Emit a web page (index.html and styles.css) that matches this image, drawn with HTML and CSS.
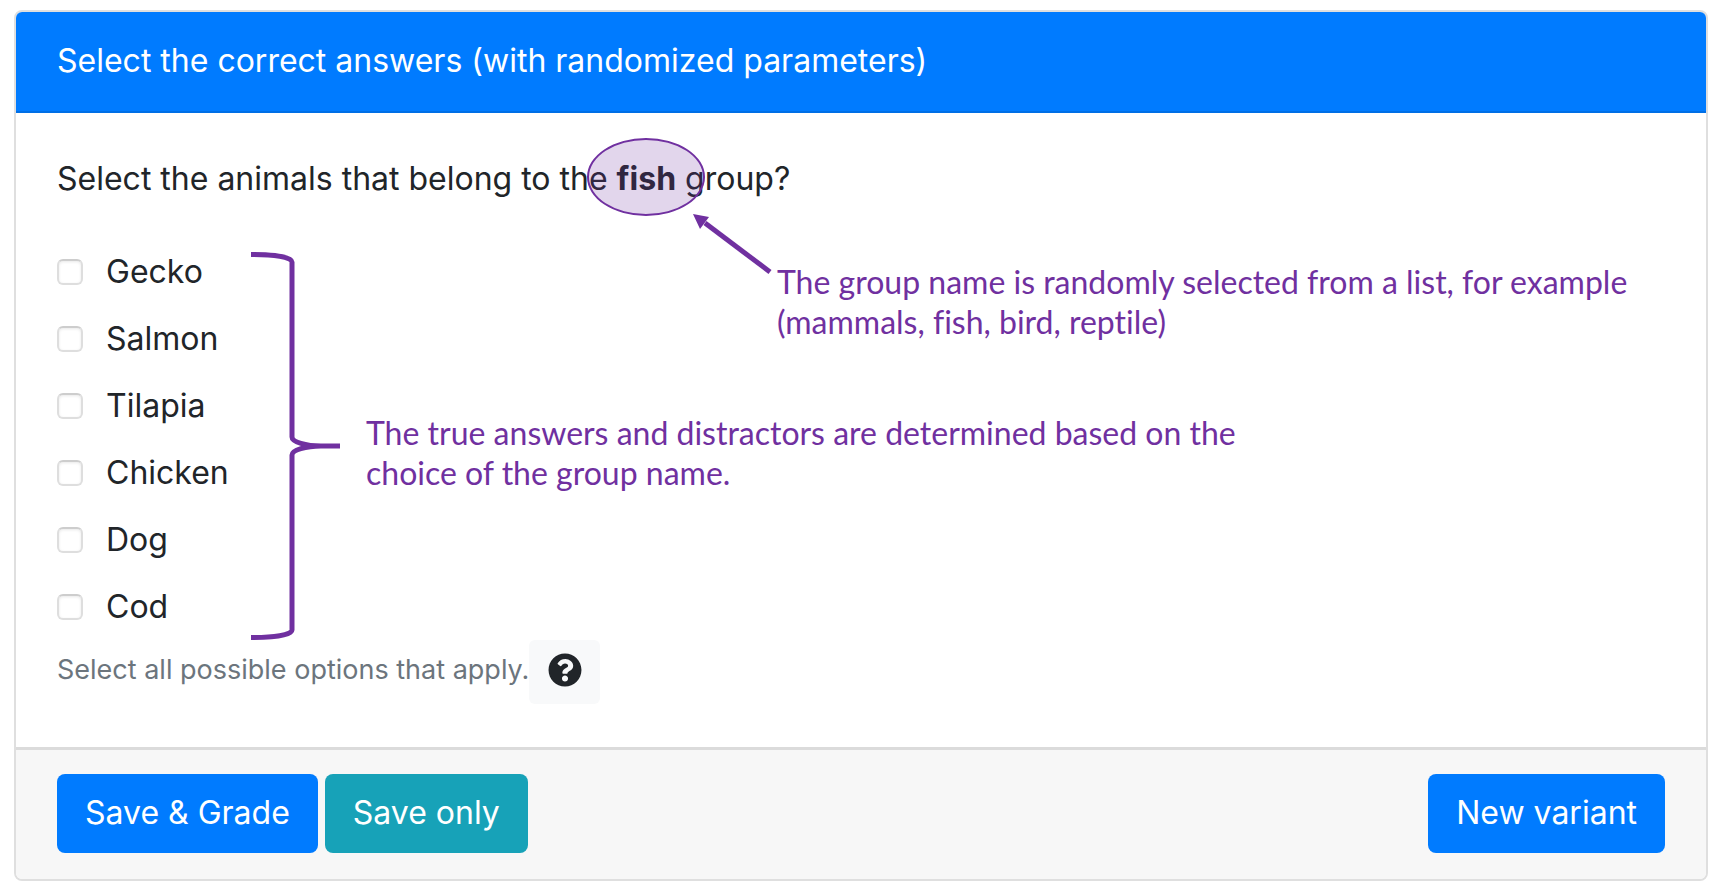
FILE: index.html
```html
<!DOCTYPE html>
<html lang="en">
<head>
<meta charset="utf-8">
<title>Select the correct answers</title>
<link rel="stylesheet" href="styles.css">
</head>
<body>
<form class="card">
  <header class="card-header">
    <h1 class="title">Select the correct answers (with randomized parameters)</h1>
  </header>
  <main class="card-body">
    <div class="question">
      <p class="prompt">Select the animals that belong to the <strong class="group">fish<span class="ellipse"></span></strong> group?</p>
      <div class="callout">
        <svg class="arrow" viewBox="0 0 80 62" aria-hidden="true">
          <path d="M12 9 77 58" stroke="#7030a0" stroke-width="5" fill="none"/>
          <path d="M0 0 16 3 7 15Z" fill="#7030a0"/>
        </svg>
        <p class="note">The group name is randomly selected from a list, for example<br>(mammals, fish, bird, reptile)</p>
      </div>
    </div>
    <div class="answers">
      <div class="options">
        <label class="option"><input class="check" type="checkbox">Gecko</label>
        <label class="option"><input class="check" type="checkbox">Salmon</label>
        <label class="option"><input class="check" type="checkbox">Tilapia</label>
        <label class="option"><input class="check" type="checkbox">Chicken</label>
        <label class="option"><input class="check" type="checkbox">Dog</label>
        <label class="option"><input class="check" type="checkbox">Cod</label>
      </div>
      <svg class="bracket" viewBox="0 0 90 388" aria-hidden="true">
        <path d="M0 2.500C22 2.500 41 5 41 10V185C41 190 55 194 70 194H89M0 385.500C22 385.500 41 383 41 378V203C41 198 55 194 70 194" fill="none" stroke="#7030a0" stroke-width="5"/>
      </svg>
      <p class="note">The true answers and distractors are determined based on the<br>choice of the group name.</p>
    </div>
    <div class="help">
      <span class="help-text">Select all possible options that apply.</span>
      <button class="help-button" type="button" aria-label="Help">
        <svg class="help-icon" viewBox="0 0 512 512" aria-hidden="true"><path fill="currentColor" d="M504 256c0 136.997-111.043 248-248 248S8 392.997 8 256C8 119.083 119.043 8 256 8s248 111.083 248 248zM262.655 90c-54.497 0-89.255 22.957-116.549 63.758-3.536 5.286-2.353 12.415 2.715 16.258l34.699 26.310c5.205 3.947 12.621 3.008 16.665-2.122 17.864-22.658 30.113-35.797 57.303-35.797 20.429 0 45.698 13.148 45.698 32.958 0 14.976-12.363 22.667-32.534 33.976C247.128 238.528 216 254.941 216 296v4c0 6.627 5.373 12 12 12h56c6.627 0 12-5.373 12-12v-1.333c0-28.462 83.186-29.647 83.186-106.667 0-58.002-60.165-102-116.531-102zM256 338c-25.365 0-46 20.635-46 46 0 25.364 20.635 46 46 46s46-20.636 46-46c0-25.365-20.635-46-46-46z"/></svg>
      </button>
    </div>
  </main>
  <footer class="card-footer">
    <button class="button primary" type="submit">Save &amp; Grade</button>
    <button class="button info" type="button">Save only</button>
    <button class="button primary last" type="button">New variant</button>
  </footer>
</form>
</body>
</html>
```
FILE: styles.css
```css
* { box-sizing: border-box; }

body {
  margin: 10px 16px 6px 14px;
  background: #fff;
  color: #212529;
  font: 32px/49px Inter, "Liberation Sans", sans-serif;
}

p, h1 { margin: 0; }

.card {
  border: 2px solid #dfdfdf;
  border-radius: 8px;
  overflow: hidden;
}

.card-header {
  padding: 24px 41px 26px;
  background: #007bff;
  border-bottom: 2px solid #006fe6;
  color: #fff;
}

.title { font: inherit; }

.card-body { padding: 41px 41px 43px; }

.question { position: relative; }

.group { position: relative; }

.ellipse {
  position: absolute;
  left: 50%;
  bottom: -18px;
  width: 118px;
  height: 78px;
  transform: translateX(-50%);
  border: 2px solid #7030a0;
  border-radius: 50%;
  background: rgba(112, 48, 160, 0.2);
}

.callout {
  position: absolute;
  left: 636px;
  top: 60px;
  display: flex;
  gap: 4px;
}

.arrow {
  flex: none;
  width: 80px;
  height: 62px;
}

.callout .note { padding-top: 48px; }

.note {
  color: #7030a0;
  font: 32px/40px Lato, sans-serif;
  font-variant-ligatures: none;
  white-space: nowrap;
}

.answers {
  display: flex;
  align-items: center;
  margin-top: 35px;
}

.options {
  display: flex;
  flex-direction: column;
  width: 194px;
}

.option {
  display: flex;
  align-items: center;
  gap: 23px;
  height: 67px;
}

.check {
  appearance: none;
  width: 26px;
  height: 26px;
  margin: 0;
  border: 2px solid #dedede;
  border-top-color: #cdcdcd;
  border-radius: 6px;
  background: #fff;
  box-shadow: inset 0 1px 3px #e8e8e8;
}

.bracket {
  flex: none;
  width: 90px;
  height: 388px;
  margin: 14px 25px 0 0;
}

.answers .note { padding-top: 28px; }

.help {
  display: flex;
  align-items: center;
  color: #6c757d;
  font-size: 27px;
}

.help-text { padding-bottom: 6px; }

.help-button {
  display: flex;
  align-items: center;
  justify-content: center;
  width: 71px;
  height: 64px;
  padding: 0 0 4px;
  border: 0;
  border-radius: 6px;
  background: #f8f9fa;
  color: #212529;
}

.help-icon {
  width: 34px;
  height: 34px;
}

.card-footer {
  display: flex;
  gap: 7px;
  padding: 24px 41px 26px;
  border-top: 3px solid #dbdbdb;
  background: #f7f7f7;
}

.button {
  padding: 14px 28px 16px;
  border: 0;
  border-radius: 8px;
  color: #fff;
  font: inherit;
}

.primary { background: #007bff; }

.info { background: #17a2b8; }

.last { margin-left: auto; }
```
